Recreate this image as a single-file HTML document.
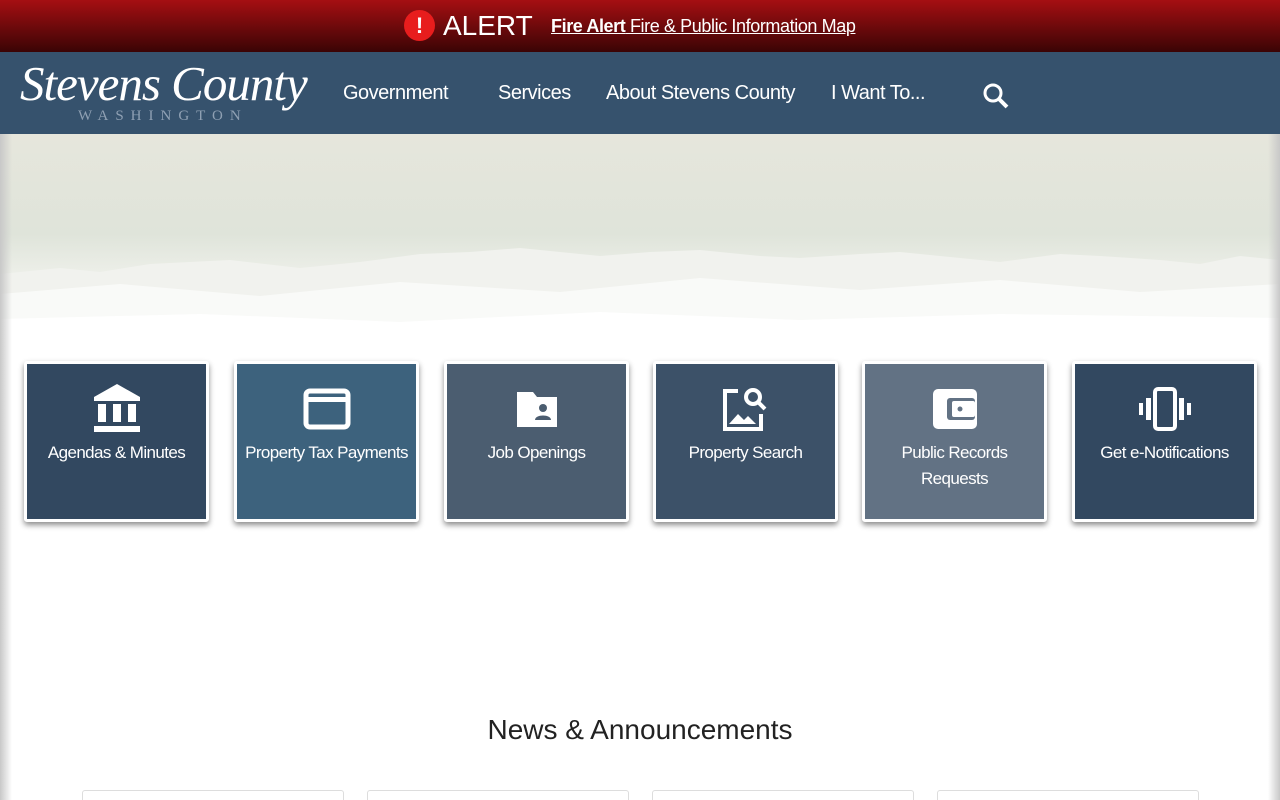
<!DOCTYPE html>
<html><head><meta charset="utf-8"><style>
*{margin:0;padding:0;box-sizing:border-box}
html{overflow:hidden;height:800px}
body{width:1280px;height:800px;overflow:hidden;background:#fff;font-family:"Liberation Sans",sans-serif;position:relative}
.alert{height:52px;background:linear-gradient(#a50f12,#3a0405);color:#fff;position:relative}
.alert .ic{position:absolute;left:404px;top:10px;width:31px;height:31px;border-radius:50%;background:#e81d1d;color:#fff;font-weight:bold;font-size:22px;text-align:center;line-height:31px}
.alert .t{position:absolute;left:443px;top:10px;font-size:28px}
.alert .l{position:absolute;left:551px;top:16px;font-size:18px;text-decoration:underline;letter-spacing:-.4px}
nav{height:82px;background:#36526d;position:relative;color:#fff}
.logo{position:absolute;left:20px;top:3px;font-family:"Liberation Serif",serif;font-style:italic;font-size:49px;letter-spacing:-1px}
.wash{position:absolute;left:78px;top:56px;font-family:"Liberation Serif",serif;font-size:15px;letter-spacing:7px;color:#8fa0b3}
.m{position:absolute;top:30px;font-size:20px;letter-spacing:-.5px}
.hero{position:absolute;top:134px;left:0;width:1280px;height:222px;background:linear-gradient(#e6e6dc,#dfe4da 45%,#eef0ea 65%,#fff 100%)}
.hero svg{position:absolute;left:0;top:100px}
.edge{position:absolute;top:134px;width:12px;height:666px}
.tile{position:absolute;top:361px;width:185px;height:161px;border:3px solid #fff;border-radius:3px;box-shadow:0 3px 6px rgba(0,0,0,.45);color:#fff;text-align:center;font-size:17px;line-height:26px;letter-spacing:-.6px;white-space:nowrap}
.tile svg{display:block;margin:20px auto 6px}
h2{position:absolute;top:714px;width:1280px;text-align:center;font-size:28px;font-weight:normal;color:#222}
.card{position:absolute;top:790px;width:262px;height:20px;border:1px solid #ddd;border-radius:3px}
</style></head><body>
<div class="alert"><div class="ic">!</div><div class="t">ALERT</div><div class="l"><b>Fire Alert</b> Fire &amp; Public Information Map</div></div>
<nav><div class="logo">Stevens County</div><div class="wash">WASHINGTON</div>
<div class="m" style="left:343px">Government</div><div class="m" style="left:498px">Services</div><div class="m" style="left:606px">About Stevens County</div><div class="m" style="left:831px">I Want To...</div>
<svg style="position:absolute;left:981px;top:29px" width="30" height="30" viewBox="0 0 30 30"><circle cx="12" cy="12" r="8" fill="none" stroke="#fff" stroke-width="3"/><path d="M18 18l8 8" stroke="#fff" stroke-width="4"/></svg>
</nav>
<div class="hero"><svg width="1280" height="122"><path d="M0 40 L60 34 L100 38 L150 30 L230 26 L300 34 L360 28 L420 20 L470 18 L520 14 L600 22 L650 18 L700 16 L760 22 L800 24 L860 20 L900 18 L960 24 L1000 28 L1060 20 L1100 22 L1160 26 L1200 30 L1240 22 L1280 26 L1280 122 L0 122Z" fill="#f1f2ee"/><path d="M0 60 L120 50 L260 62 L400 48 L560 58 L700 44 L860 56 L1000 46 L1140 58 L1280 50 L1280 122 L0 122Z" fill="#f9faf8"/><path d="M0 85 L200 80 L400 88 L600 78 L800 86 L1000 80 L1280 84 L1280 122 L0 122Z" fill="#fff"/></svg></div>
<div class="edge" style="left:0;background:linear-gradient(90deg,#c8c8c8,rgba(255,255,255,0))"></div>
<div class="edge" style="right:0;background:linear-gradient(270deg,#c8c8c8,rgba(255,255,255,0))"></div>
<div class="tile" style="left:24px;background:#324860"><svg width="48" height="50" viewBox="0 0 48 50"><path d="M24 0L47 13H1Z M1 13h46v4H1z" fill="#fff"/><rect x="5" y="20" width="8" height="18" fill="#fff"/><rect x="20" y="20" width="8" height="18" fill="#fff"/><rect x="35" y="20" width="8" height="18" fill="#fff"/><rect x="1" y="42" width="46" height="6" fill="#fff"/></svg>Agendas &amp; Minutes</div>
<div class="tile" style="left:234px;background:#3d627d"><svg width="48" height="50" viewBox="0 0 48 50"><rect x="3" y="7" width="42" height="36" rx="4" fill="none" stroke="#fff" stroke-width="5"/><rect x="3" y="13" width="42" height="5" fill="#fff"/></svg>Property Tax Payments</div>
<div class="tile" style="left:444px;background:#4b5d70"><svg width="48" height="50" viewBox="0 0 48 50"><path d="M4 8h16l4 5h20v30H4z" fill="#fff"/><circle cx="30" cy="24" r="4" fill="#4b5d70"/><path d="M22 36c0-6 16-6 16 0z" fill="#4b5d70"/></svg>Job Openings</div>
<div class="tile" style="left:653px;background:#3c5168"><svg width="52" height="50" viewBox="0 0 52 50"><path d="M18 7H5v38h36V30" fill="none" stroke="#fff" stroke-width="4"/><path d="M9 40l9-10 6 6 4-4 8 8z" fill="#fff"/><circle cx="33" cy="13" r="7" fill="none" stroke="#fff" stroke-width="4"/><path d="M38 18l7 7" stroke="#fff" stroke-width="4"/></svg>Property Search</div>
<div class="tile" style="left:862px;background:#627284"><svg width="48" height="50" viewBox="0 0 48 50"><rect x="2" y="5" width="44" height="40" rx="5" fill="#fff"/><rect x="16" y="14" width="28" height="22" rx="3" fill="#627284"/><rect x="21" y="17" width="23" height="16" rx="2" fill="#fff"/><circle cx="29" cy="25" r="2.5" fill="#627284"/></svg>Public Records<br>Requests</div>
<div class="tile" style="left:1072px;background:#324860"><svg width="58" height="50" viewBox="0 0 58 50"><rect x="19" y="5" width="20" height="40" rx="3" fill="none" stroke="#fff" stroke-width="4"/><rect x="10" y="14" width="5" height="22" fill="#fff"/><rect x="43" y="14" width="5" height="22" fill="#fff"/><rect x="3" y="19" width="4" height="12" fill="#fff"/><rect x="51" y="19" width="4" height="12" fill="#fff"/></svg>Get e-Notifications</div>
<h2>News &amp; Announcements</h2>
<div class="card" style="left:82px"></div><div class="card" style="left:367px"></div><div class="card" style="left:652px"></div><div class="card" style="left:937px"></div>
</body></html>
